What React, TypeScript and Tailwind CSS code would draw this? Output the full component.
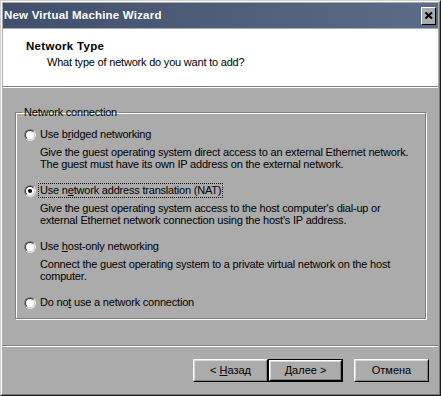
import React from "react";

function Radio({ checked }: { checked?: boolean }) {
  return (
    <div className="w-[12px] h-[12px] shrink-0 rounded-full border border-t-[#808080] border-l-[#808080] border-r-[#e8e8e8] border-b-[#e8e8e8]">
      <div className="w-full h-full rounded-full bg-white border border-t-[#303030] border-l-[#303030] border-r-[#d0d0d0] border-b-[#d0d0d0] flex items-center justify-center">
        {checked && <div className="w-[4px] h-[4px] rounded-full bg-black" />}
      </div>
    </div>
  );
}

function Option({
  label,
  desc,
  checked,
  focused,
  className,
}: {
  label: React.ReactNode;
  desc?: React.ReactNode;
  checked?: boolean;
  focused?: boolean;
  className?: string;
}) {
  return (
    <div className={className}>
      <div className="flex items-center h-[13px]">
        <Radio checked={checked} />
        <span
          className={
            "ml-[3px] px-px leading-[13px] whitespace-nowrap " +
            (focused ? "outline outline-1 outline-dotted outline-black" : "")
          }
        >
          {label}
        </span>
      </div>
      {desc && <div className="ml-[16px] mt-[5px] leading-[12px] whitespace-nowrap">{desc}</div>}
    </div>
  );
}

function Button({ children, isDefault }: { children: React.ReactNode; isDefault?: boolean }) {
  return (
    <div className={"w-[75px] h-[23px] " + (isDefault ? "border border-black" : "")}>
      <div className="w-full h-full border border-t-white border-l-white border-r-black border-b-black">
        <div className="w-full h-full border border-t-[#d8d8d8] border-l-[#d8d8d8] border-r-[#808080] border-b-[#808080] flex items-center justify-center text-[11px] text-black whitespace-pre">
          {children}
        </div>
      </div>
    </div>
  );
}

export default function App() {
  return (
    <div
      className="w-[441px] h-[396px] border border-t-[#d0d0d0] border-l-[#d0d0d0] border-r-[#1c1c1c] border-b-[#1c1c1c] bg-[#ababab]"
      style={{ fontFamily: '"Liberation Sans", Arial, sans-serif' }}
    >
      <div className="w-full h-full border border-t-white border-l-white border-r-[#777777] border-b-[#777777] p-px flex flex-col">
        {/* Title bar */}
        <div className="h-[25px] bg-gradient-to-r from-[#3f4f6c] to-[#5b6c89] flex items-center justify-between pl-[1px] pr-[2px]">
          <span className="text-white font-bold text-[11.5px] tracking-[0.2px]">
            New Virtual Machine Wizard
          </span>
          <div className="w-[15px] h-[18px] bg-[#ababab] border border-t-white border-l-white border-r-black border-b-black flex items-center justify-center">
            <svg width="8" height="7" viewBox="0 0 8 7">
              <path d="M0.5 0.5L7 6.5M7 0.5L0.5 6.5" stroke="#000" strokeWidth="2" />
            </svg>
          </div>
        </div>

        {/* Header */}
        <div className="mt-px h-[58px] bg-white border-b border-[#7f7f7f] pl-[23px] pt-[11px] text-black">
          <div className="font-bold text-[11.5px] leading-[13px] tracking-[0.3px]">Network Type</div>
          <div className="ml-[21px] mt-[3px] text-[11px] leading-[13px] tracking-[-0.2px]">
            What type of network do you want to add?
          </div>
        </div>
        <div className="h-px bg-white" />

        {/* Body */}
        <div className="flex-1 flex flex-col text-[11px] tracking-[-0.2px] text-black">
          <div className="px-[12px] pt-[18px]">
            <fieldset className="h-[213px] border border-[#808080] shadow-[inset_1px_1px_0_#ffffff,1px_1px_0_#ffffff] px-[8px]">
              <legend className="-ml-[2px] px-[2px] leading-[13px]">Network connection</legend>
              <Option
                className="mt-[9px]"
                label={
                  <>
                    Use b<u>r</u>idged networking
                  </>
                }
                desc={
                  <>
                    Give the guest operating system direct access to an external Ethernet network.
                    <br />
                    The guest must have its own IP address on the external network.
                  </>
                }
              />
              <Option
                className="mt-[14px]"
                checked
                focused
                label={
                  <>
                    Use n<u>e</u>twork address translation (NAT)
                  </>
                }
                desc={
                  <>
                    Give the guest operating system access to the host computer's dial-up or
                    <br />
                    external Ethernet network connection using the host's IP address.
                  </>
                }
              />
              <Option
                className="mt-[14px]"
                label={
                  <>
                    Use <u>h</u>ost-only networking
                  </>
                }
                desc={
                  <>
                    Connect the guest operating system to a private virtual network on the host
                    <br />
                    computer.
                  </>
                }
              />
              <Option
                className="mt-[14px]"
                label={
                  <>
                    Do no<u>t</u> use a network connection
                  </>
                }
              />
            </fieldset>
          </div>
          <div className="mt-[26px] h-px bg-[#808080]" />
          <div className="h-px bg-white" />
          <div className="flex justify-end pr-[9px] pt-[12px] tracking-normal">
            <Button>
              {"< "}
              <u>Н</u>азад
            </Button>
            <Button isDefault>
              <u>Д</u>алее{" >"}
            </Button>
            <div className="w-[11px]" />
            <Button>Отмена</Button>
          </div>
        </div>
      </div>
    </div>
  );
}
